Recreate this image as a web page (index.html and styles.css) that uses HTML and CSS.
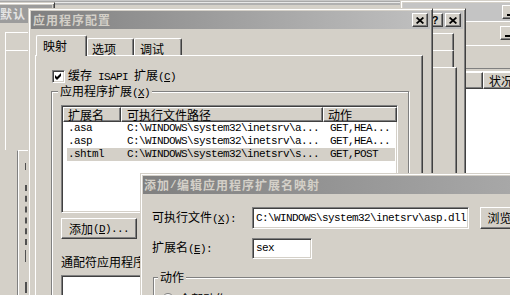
FILE: index.html
```html
<!DOCTYPE html>
<html>
<head>
<meta charset="utf-8">
<title>应用程序配置</title>
<link rel="stylesheet" href="styles.css">
</head>
<body>
<div class="desk">

  <div class="win wleft">
    <div class="title tl">默认</div>
    <div class="lbody">
      <div class="bx bx1"></div>
      <div class="bx bx2"></div>
      <div class="bx3">
        <i class="mk mk1"></i><i class="mk mk2"></i><i class="mk mk3"></i><i class="mk mk4"></i>
      </div>
    </div>
  </div>

  <div class="win wc">
    <div class="ctitle"><span class="tbtn"><i class="minbar"></i></span></div>
    <div class="cmenu"><span class="tbtn"><i class="minbar"></i></span></div>
    <div class="ctool"></div>
    <div class="csep"></div>
    <div class="chead"><span class="hc cw0"></span><span class="hc cw1">状况</span></div>
    <div class="clist"></div>
  </div>

  <div class="win wb">
    <div class="title"><span class="tbtn push qm">?</span><span class="tbtn gap2"><svg width="8" height="7" viewBox="0 0 8 7"><path d="M0.6 0.5 7.4 6.5M7.4 0.5 0.6 6.5" stroke="#000" stroke-width="1.7"/></svg></span></div>
    <div class="bbody">
      <div class="bt"></div>
      <div class="bt"></div>
      <div class="bp"></div>
    </div>
  </div>

  <div class="win main">
    <div class="title">应用程序配置<span class="tbtn push"><svg width="8" height="7" viewBox="0 0 8 7"><path d="M0.6 0.5 7.4 6.5M7.4 0.5 0.6 6.5" stroke="#000" stroke-width="1.7"/></svg></span></div>
    <div class="mbody">
      <div class="tabs">
        <span class="tab sel">映射</span><span class="tab t2">选项</span><span class="tab t3">调试</span>
      </div>
      <div class="panel">
        <div class="chk">
          <span class="cbox"><svg width="7" height="7" viewBox="0 0 7 7"><path d="M0 2 2 4 6 0 6 3 2 7 0 5Z" fill="#000"/></svg></span>
          <span>缓存<span class="m"> ISAPI </span>扩展<span class="m">(<u>C</u>)</span></span>
        </div>
        <div class="grp g1">
          <span class="glab">应用程序扩展<span class="m">(<u>X</u>)</span></span>
          <div class="list">
            <div class="lhead"><span class="hc w1">扩展名</span><span class="hc w2">可执行文件路径</span><span class="hc w3">动作</span></div>
            <div class="lrow"><span class="c1 m">.asa</span><span class="c2 m">C:\WINDOWS\system32\inetsrv\a...</span><span class="c3 m">GET,HEA...</span></div>
            <div class="lrow"><span class="c1 m">.asp</span><span class="c2 m">C:\WINDOWS\system32\inetsrv\a...</span><span class="c3 m">GET,HEA...</span></div>
            <div class="lrow sel"><span class="c1 m">.shtml</span><span class="c2 m">C:\WINDOWS\system32\inetsrv\s...</span><span class="c3 m">GET,POST</span></div>
          </div>
          <div class="btn b1">添加<span class="m">(<u>D</u>)...</span></div>
          <div class="wlab">通配符应用程序映射</div>
          <div class="wlist"></div>
        </div>
      </div>
    </div>
  </div>

  <div class="win front">
    <div class="title ft">添加<span class="m">/</span>编辑应用程序扩展名映射</div>
    <div class="fbody">
      <div class="frow">
        <span class="flab">可执行文件<span class="m">(<u>X</u>):</span></span>
        <span class="inp i1 m">C:\WINDOWS\system32\inetsrv\asp.dll</span>
        <span class="btn b2">浏览<span class="m">(<u>B</u>)...</span></span>
      </div>
      <div class="frow r2">
        <span class="flab">扩展名<span class="m">(<u>E</u>):</span></span>
        <span class="inp i2 m">sex</span>
      </div>
      <div class="grp fg">
        <span class="glab">动作</span>
        <div class="radio"><span class="rb"></span><span>全部动作</span></div>
      </div>
    </div>
  </div>

</div>
</body>
</html>
```

FILE: styles.css
```css
* { box-sizing: border-box; margin: 0; padding: 0; }
html, body { margin: 0; padding: 0; background: #d4d0c8; }
body {
  width: 510px; height: 295px; overflow: hidden;
  font-family: "Noto Sans CJK SC", "Noto Sans CJK JP", sans-serif;
  font-size: 12px; line-height: 12px; color: #000;
}
i { font-style: normal; }
.desk {
  position: relative; width: 510px; height: 295px; overflow: hidden;
  background: linear-gradient(#c8c8c8 0 1px, #a8a8a8 1px 2px, #e8e8e8 2px 3px, #b0b0b0 3px 5px, #d4d0c8 5px);
}
.m { font-family: "Liberation Mono", monospace; font-size: 11px; letter-spacing: -0.6px; }
u { text-decoration: underline; text-underline-offset: 1px; }

/* generic window */
.win {
  position: absolute; display: flex; flex-direction: column; overflow: hidden;
  background: #d4d0c8;
  border: 1px solid; border-color: #d4d0c8 #404040 #404040 #d4d0c8;
  box-shadow: inset 1px 1px #fff, inset -1px -1px #808080;
  padding: 2px;
}
.title {
  flex: none; height: 18px; display: flex; align-items: center;
  padding: 0 2px 0 2px;
  background: linear-gradient(to right, #808080, #c0c0c0);
  color: #d4d0c8; font-weight: bold; letter-spacing: 1px; white-space: nowrap;
}
.title .m { font-weight: bold; letter-spacing: 0.4px; }
.tbtn {
  flex: none; width: 16px; height: 14px;
  display: flex; align-items: center; justify-content: center;
  background: #d4d0c8; color: #000; letter-spacing: 0;
  border: 1px solid; border-color: #fff #404040 #404040 #fff;
  box-shadow: inset -1px -1px #808080;
}
.push { margin-left: auto; }
.gap2 { margin-left: 2px; }
.qm { font-family: "Liberation Sans", sans-serif; font-weight: bold; font-size: 11px; }
.minbar { display: block; width: 6px; height: 2px; background: #000; margin-top: 6px; }

/* left background window */
.wleft { left: -5px; top: 2px; width: 60px; height: 300px; }
.tl { background: #9c9c9c; color: #e4e4e4; }
.lbody { display: flex; flex-direction: column; padding-left: 7px; }
.bx { border-top: 1px solid #fff; border-left: 1px solid #fff; width: 40px; }
.bx1 { margin-top: 9px; height: 18px; }
.bx2 { height: 100px; }
.bx3 {
  margin-left: 12px; height: 160px; display: flex; flex-direction: column;
  border-left: 1px solid #808080; border-top: 1px solid #fff;
  box-shadow: inset 1px 0 #fff; padding-left: 7px;
}
.mk { display: block; width: 2px; background: #505050; }
.mk1 { margin-top: 12px; height: 7px; width: 1px; }
.mk2 { margin-top: 15px; height: 60px; background: none; border-left: 2px dashed #505050; }
.mk3 { margin-top: 5px; height: 12px; width: 1px; }
.mk4 { margin-top: 20px; height: 11px; }

/* far right background window */
.wc { left: 400px; top: 0; width: 130px; height: 180px; }
.ctitle { flex: none; height: 18px; background: #c4c4c4; display: flex; align-items: center; padding-left: 99px; }
.cmenu { flex: none; height: 24px; border-top: 1px solid #fff; padding: 4px 0 0 97px; display: flex; align-items: flex-start; }
.ctool { flex: none; height: 23px; border-top: 1px solid #fff; }
.csep { flex: none; height: 4px; border-top: 1px solid #808080; border-bottom: 1px solid #fff; }
.chead { flex: none; display: flex; height: 17px; }
.cw0 { width: 80px; }
.cw1 { width: 60px; padding-left: 5px; }
.clist { flex: 1; background: #fff; }

/* middle background window */
.wb { left: 250px; top: 8px; width: 216px; height: 300px; }
.bbody { display: flex; flex-direction: column; padding-top: 4px; }
.bt { height: 17px; margin-right: 9px; border-top: 1px solid #fff; border-right: 1px solid #404040; box-shadow: inset -1px 0 #808080; }
.bp { height: 160px; margin-right: 6px; border-top: 1px solid #fff; border-right: 1px solid #404040; box-shadow: inset -1px 0 #808080; }

/* main window */
.main { left: 28px; top: 8px; width: 405px; height: 300px; }
.mbody { flex: 1; display: flex; flex-direction: column; padding: 6px 7px 0 4px; }
.tabs { flex: none; height: 20px; display: flex; align-items: flex-start; }
.tab {
  flex: none; display: block; background: #d4d0c8; white-space: nowrap;
  border-left: 1px solid #fff; border-top: 1px solid #fff; border-right: 1px solid #404040;
  box-shadow: inset -1px 0 #808080;
  border-radius: 2px 2px 0 0;
}
.tab.sel { position: relative; z-index: 2; margin-left: 1px; width: 51px; height: 21px; padding: 4px 0 0 6px; }
.t2 { margin-top: 3px; width: 47px; height: 17px; padding: 4px 0 0 4px; }
.t3 { margin-top: 3px; width: 48px; height: 17px; padding: 4px 0 0 5px; }
.panel {
  flex: 1; display: flex; flex-direction: column;
  border-top: 1px solid #fff; border-left: 1px solid #fff; border-right: 1px solid #404040;
  box-shadow: inset -1px 0 #808080;
}
.chk { display: flex; align-items: center; gap: 3px; margin: 13px 0 0 16px; white-space: nowrap; }
.cbox {
  flex: none; width: 13px; height: 13px; background: #fff;
  display: flex; align-items: center; justify-content: center;
  border: 1px solid; border-color: #808080 #fff #fff #808080;
  box-shadow: inset 1px 1px #404040, inset -1px -1px #d4d0c8;
}
.grp {
  display: flex; flex-direction: column; align-items: flex-start;
  border: 1px solid #808080;
  box-shadow: inset 1px 1px #fff, 1px 1px #fff;
}
.glab { display: block; margin: -7px 0 0 6px; padding: 0 2px; background: #d4d0c8; white-space: nowrap; line-height: 12px; }
.g1 { margin: 8px 13px 0 15px; height: 260px; }
.list {
  margin: 6px 0 0 9px; width: 337px; height: 108px; overflow: hidden;
  background: #fff; padding: 1px;
  border: 1px solid; border-color: #808080 #fff #fff #808080;
  box-shadow: inset 1px 1px #404040, inset -1px -1px #d4d0c8;
}
.lhead { display: flex; height: 15px; }
.hc {
  flex: none; display: block; height: 15px; line-height: 13px; white-space: nowrap;
  background: #d4d0c8;
  border: 1px solid; border-color: #fff #404040 #404040 #fff;
  box-shadow: inset -1px -1px #808080;
}
.chead .hc { height: 17px; line-height: 15px; }
.w1 { width: 58px; padding-left: 4px; }
.w2 { width: 202px; padding-left: 5px; }
.w3 { width: 74px; padding-left: 4px; }
.lrow { display: flex; height: 13px; line-height: 13px; margin: 0 1px 0 4px; white-space: nowrap; }
.lrow.sel { background: #d4d0c8; }
.c1 { flex: none; width: 54px; padding-left: 1px; }
.c2 { flex: none; width: 202px; padding-left: 6px; }
.c3 { flex: 1; padding-left: 7px; }
.btn {
  display: flex; align-items: center; justify-content: center; white-space: nowrap;
  background: #d4d0c8;
  border: 1px solid; border-color: #fff #404040 #404040 #fff;
  box-shadow: inset -1px -1px #808080;
}
.b1 { margin: 5px 0 0 9px; width: 76px; height: 21px; }
.wlab { margin: 17px 0 0 9px; white-space: nowrap; }
.wlist {
  margin: 7px 0 0 9px; width: 337px; height: 60px; background: #fff;
  border: 1px solid; border-color: #808080 #fff #fff #808080;
  box-shadow: inset 1px 1px #404040, inset -1px -1px #d4d0c8;
}

/* front dialog */
.front { left: 140px; top: 173px; width: 600px; height: 140px; }
.ft { padding-left: 1px; }
.fbody { display: flex; flex-direction: column; align-items: flex-start; padding: 13px 0 0 9px; }
.frow { display: flex; align-items: center; height: 22px; }
.r2 { margin-top: 8px; }
.flab { flex: none; width: 100px; white-space: nowrap; }
.inp {
  flex: none; height: 22px; display: flex; align-items: center; padding-left: 3px;
  white-space: nowrap; overflow: hidden; background: #fff;
  border: 1px solid; border-color: #808080 #fff #fff #808080;
  box-shadow: inset 1px 1px #404040, inset -1px -1px #d4d0c8;
}
.i1 { width: 217px; }
.i2 { width: 60px; height: 21px; }
.b2 { flex: none; margin-left: 11px; width: 75px; height: 22px; }
.fg { margin: 18px 0 0 1px; width: 500px; height: 60px; }
.fg .glab { margin-left: 4px; }
.radio { display: flex; align-items: center; gap: 5px; margin: 10px 0 0 8px; }
.rb { width: 12px; height: 12px; border-radius: 50%; background: #fff; border: 1px solid #808080; }
```
